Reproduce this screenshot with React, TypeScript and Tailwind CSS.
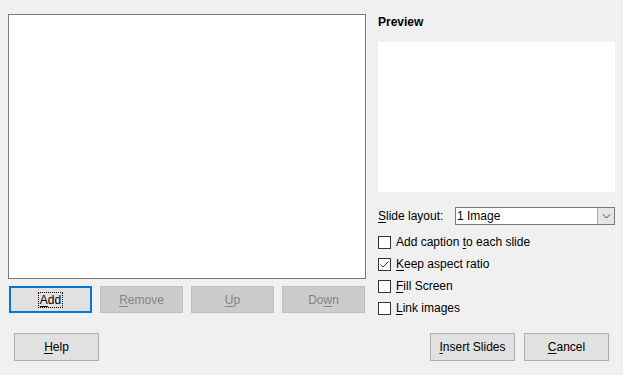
import React from 'react';

const font = { fontFamily: '"Liberation Sans", Arial, sans-serif' };

const Mn: React.FC<{ children: React.ReactNode }> = ({ children }) => (
    <span className="underline underline-offset-[2px]">{children}</span>
);

interface BtnProps {
    children: React.ReactNode;
    disabled?: boolean;
    focused?: boolean;
    className?: string;
}

const Btn: React.FC<BtnProps> = ({ children, disabled, focused, className = '' }) => {
    if (focused) {
        return (
            <div className={`flex items-center justify-center border-2 border-[#0078d7] bg-[#e1e1e1] text-black ${className}`}>
                <span className="border border-dotted border-black px-[1px] leading-[14px]">{children}</span>
            </div>
        );
    }
    return (
        <div
            className={`flex items-center justify-center border ${
                disabled ? 'border-[#bfbfbf] bg-[#cccccc] text-[#838383]' : 'border-[#adadad] bg-[#e1e1e1] text-black'
            } ${className}`}
        >
            {children}
        </div>
    );
};

const Check: React.FC<{ checked?: boolean; children: React.ReactNode }> = ({ checked, children }) => (
    <div className="flex h-[22px] items-center">
        <div className="flex h-[13px] w-[13px] items-center justify-center border border-[#333333] bg-white">
            {checked && (
                <svg width="11" height="11" viewBox="0 0 11 11">
                    <path d="M1.5 5.5 L4 8 L9.5 2.5" fill="none" stroke="#333333" strokeWidth="1" />
                </svg>
            )}
        </div>
        <span className="ml-[5px]">{children}</span>
    </div>
);

export default function App() {
    return (
        <div className="h-[375px] w-[623px] bg-[#f0f0f0] text-[12px] text-black" style={font}>
            <div className="flex items-start">
                {/* left column */}
                <div className="ml-[8px] mt-[14px] w-[358px]">
                    <div className="h-[265px] border border-[#7a7a7a] bg-white" />
                    <div className="mt-[7px] flex gap-[8px] pl-[1px]">
                        <Btn focused className="h-[27px] w-[83px]">
                            <Mn>A</Mn>dd
                        </Btn>
                        <Btn disabled className="h-[27px] w-[83px]">
                            <Mn>R</Mn>emove
                        </Btn>
                        <Btn disabled className="h-[27px] w-[83px]">
                            <Mn>U</Mn>p
                        </Btn>
                        <Btn disabled className="h-[27px] w-[83px]">
                            Do<Mn>w</Mn>n
                        </Btn>
                    </div>
                </div>

                {/* right column */}
                <div className="ml-[12px] mt-[14px] w-[237px]">
                    <div className="flex h-[16px] items-center font-bold">Preview</div>
                    <div className="mt-[12px] h-[150px] bg-white" />
                    <div className="mt-[15px] flex h-[18px] items-center">
                        <span className="w-[77px]">
                            <Mn>S</Mn>lide layout:
                        </span>
                        <div className="flex h-[18px] flex-1 items-stretch border border-[#7a7a7a] bg-white">
                            <span className="flex flex-1 items-center pl-[1px]">1 Image</span>
                            <div className="flex w-[17px] items-center justify-center border-l border-[#ababab] bg-[#e5e5e5]">
                                <svg width="9" height="6" viewBox="0 0 9 6">
                                    <path d="M1 1.5 L4.5 5 L8 1.5" fill="none" stroke="#444444" strokeWidth="1" />
                                </svg>
                            </div>
                        </div>
                    </div>
                    <div className="mt-[6px]">
                        <Check>
                            Add caption <Mn>t</Mn>o each slide
                        </Check>
                        <Check checked>
                            <Mn>K</Mn>eep aspect ratio
                        </Check>
                        <Check>
                            <Mn>F</Mn>ill Screen
                        </Check>
                        <Check>
                            <Mn>L</Mn>ink images
                        </Check>
                    </div>
                </div>
            </div>

            {/* bottom buttons */}
            <div className="mt-[14px] flex pl-[14px] pr-[14px]">
                <Btn className="h-[28px] w-[85px]">
                    <Mn>H</Mn>elp
                </Btn>
                <div className="ml-auto flex gap-[9px]">
                    <Btn className="h-[28px] w-[85px]">
                        <Mn>I</Mn>nsert Slides
                    </Btn>
                    <Btn className="h-[28px] w-[85px]">
                        <Mn>C</Mn>ancel
                    </Btn>
                </div>
            </div>
        </div>
    );
}
